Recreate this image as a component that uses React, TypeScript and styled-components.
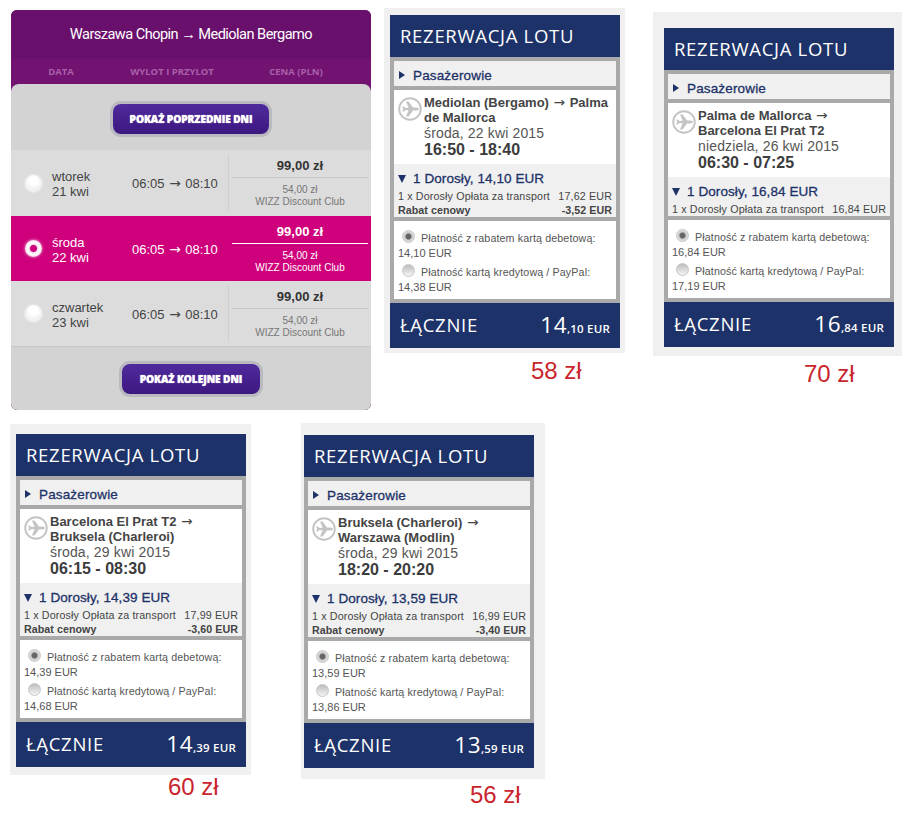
import React from "react";
import styled, { createGlobalStyle } from "styled-components";

const Global = createGlobalStyle`
  html, body { margin: 0; padding: 0; background: #fff; }
  body { font-family: "Liberation Sans", Arial, sans-serif; }
`;

const Page = styled.div`
  width: 902px;
  height: 814px;
  overflow: hidden;
  background: #fff;
`;

const TopRow = styled.div`
  display: flex;
  align-items: flex-start;
  height: 423px;
`;

const BottomRow = styled.div`
  display: flex;
  align-items: flex-start;
`;

const Arrow = styled.span`
  font-family: "DejaVu Sans", sans-serif;
  font-weight: 400;
  font-size: 1.05em;
  margin: 0 1px;
`;

/* ---------- Left schedule panel ---------- */
const Panel = styled.section`
  width: 360px;
  margin: 10px 0 0 11px;
  flex: none;
  background: #721372;
  border-radius: 6px;
  overflow: hidden;
`;

const PanelTitle = styled.h2`
  margin: 0;
  height: 49px;
  background: #69106c;
  color: #fff;
  font: 400 14.6px/49px Roboto, sans-serif;
  text-align: center;
  letter-spacing: -0.55px;
`;

const ColumnHeads = styled.div`
  display: grid;
  grid-template-columns: 100px 122px 126px;
  height: 25px;
  background: #721372;
  color: #a860a8;
  font: 700 9.5px/25px "Open Sans", sans-serif;
  text-align: center;
`;

const PanelBody = styled.div`
  background: #d3d3d3;
  border-radius: 8px 8px 6px 6px;
`;

const ButtonBar = styled.div<{ $height: number; $shift?: number }>`
  display: flex;
  justify-content: center;
  align-items: center;
  box-sizing: border-box;
  height: ${(p) => p.$height}px;
  padding-top: ${(p) => p.$shift ?? 0}px;
`;

const ShowButton = styled.button<{ $width: number }>`
  width: ${(p) => p.$width}px;
  height: 30px;
  padding: 0;
  border: none;
  border-radius: 8px;
  background: linear-gradient(#4f2a9c, #3d1880);
  box-shadow: 0 0 0 3px #b9b9c0;
  color: #fff;
  font: 800 10.2px/30px "Open Sans", sans-serif;
  letter-spacing: -0.1px;
  text-shadow: 0 0 1px #fff;
`;

const DayRow = styled.div<{ $active?: boolean; $last?: boolean }>`
  display: grid;
  grid-template-columns: 41px 80px 96px 4px 1fr;
  align-items: center;
  height: ${(p) => (p.$active ? 65 : 66)}px;
  box-sizing: border-box;
  background: ${(p) => (p.$active ? "#cf007b" : "#dcdcdc")};
  color: ${(p) => (p.$active ? "#fff" : "#444")};
  border-bottom: ${(p) => (p.$last ? "1px solid #c6c6c6" : "none")};
`;

const DayRadio = styled.span<{ $active?: boolean }>`
  justify-self: end;
  margin-right: 10px;
  width: 17px;
  height: 17px;
  border-radius: 50%;
  background: ${(p) =>
    p.$active
      ? "radial-gradient(circle, #cf007b 0 3px, #f0d8e6 4px, #fff 6px, #f7e4ef 8px)"
      : "radial-gradient(circle at 50% 35%, #fff 0 4px, #f2f2f2 8px)"};
  box-shadow: 0 0 3px rgba(255, 255, 255, 0.75);
`;

const DayName = styled.div`
  font-size: 13px;
  line-height: 15px;
  padding-top: 2px;
`;

const DayTimes = styled.div`
  font-size: 13px;
  white-space: nowrap;
`;

const DayPrices = styled.div`
  grid-column: 5;
  align-self: start;
  width: 136px;
  text-align: center;
`;

const Divider = styled.span<{ $active?: boolean }>`
  grid-column: 4;
  width: 1px;
  height: 56px;
  justify-self: start;
  background: ${(p) => (p.$active ? "transparent" : "#d0d0d0")};
`;

const MainPrice = styled.div<{ $active?: boolean }>`
  height: 28px;
  box-sizing: border-box;
  font: 700 13px/31px "Liberation Sans", sans-serif;
  color: ${(p) => (p.$active ? "#fff" : "#333")};
  border-bottom: 1px solid ${(p) => (p.$active ? "#fff" : "#c8c8c8")};
`;

const ClubPrice = styled.div<{ $active?: boolean }>`
  margin-top: 6px;
  font-size: 10px;
  line-height: 12px;
  color: ${(p) => (p.$active ? "#fff" : "#777")};
`;

/* ---------- Booking cards ---------- */
const CardColumn = styled.div<{ $left: number; $top: number }>`
  flex: none;
  margin-left: ${(p) => p.$left}px;
  margin-top: ${(p) => p.$top}px;
`;

const CardSheet = styled.article<{ $pad: string }>`
  width: fit-content;
  padding: ${(p) => p.$pad};
  background: #f0f0f0;
`;

const Card = styled.div`
  width: 230px;
`;

const CardTitle = styled.h3`
  margin: 0;
  height: 42px;
  padding-left: 10px;
  background: #1d3268;
  color: #fff;
  font: 500 18.5px/42px "Open Sans", sans-serif;
  letter-spacing: 0.7px;
`;

const Frame = styled.div`
  display: flex;
  flex-direction: column;
  gap: 4px;
  padding: 4px;
  background: #a9a9a9;
`;

const PassengerBar = styled.div`
  display: flex;
  align-items: center;
  height: 25px;
  box-sizing: border-box;
  padding: 3px 0 0 5px;
  background: #f0f0f0;
  color: #1d3268;
  font-size: 13.5px;
  letter-spacing: 0.15px;
  -webkit-text-stroke: 0.3px #1d3268;
`;

const Triangle = styled.span<{ $down?: boolean }>`
  flex: none;
  width: 0;
  height: 0;
  margin-right: 8px;
  ${(p) =>
    p.$down
      ? "border-left: 4.5px solid transparent; border-right: 4.5px solid transparent; border-top: 8px solid #1d3268; margin-left: -2px; margin-right: 7px;"
      : "border-top: 4px solid transparent; border-bottom: 4px solid transparent; border-left: 6.5px solid #1d3268;"}
`;

const RouteBox = styled.div`
  display: flex;
  height: 74px;
  box-sizing: border-box;
  padding: 5px 4px 0 4px;
  background: #fff;
  color: #444;
`;

const PlaneBadge = styled.svg`
  flex: none;
  width: 24px;
  height: 24px;
  margin: 2px 2px 0 0;
`;

const RouteText = styled.div`
  display: flex;
  flex-direction: column;
`;

const RouteName = styled.div`
  font: 700 13px/15px "Liberation Sans", sans-serif;
  color: #444;
`;

const RouteDate = styled.div`
  font-size: 14px;
  line-height: 16px;
  letter-spacing: 0.15px;
  color: #555;
`;

const RouteTime = styled.div`
  font: 700 16px/17px "Liberation Sans", sans-serif;
  color: #3c3c3c;
`;

const Fares = styled.div`
  margin-top: -4px;
  padding: 7px 4px 0;
  background: #f0f0f0;
`;

const FareHead = styled.div`
  display: flex;
  align-items: center;
  height: 15px;
  margin-bottom: 3px;
  padding-left: 2px;
  color: #1d3268;
  font-size: 13.5px;
  letter-spacing: 0.08px;
  -webkit-text-stroke: 0.3px #1d3268;
`;

const FareLine = styled.div<{ $strong?: boolean }>`
  display: flex;
  justify-content: space-between;
  height: 14px;
  font-size: 10.7px;
  line-height: 14px;
  letter-spacing: ${(p) => (p.$strong ? 0.05 : 0.15)}px;
  font-weight: ${(p) => (p.$strong ? 700 : 400)};
  color: #444;
`;

const PaymentBox = styled.div`
  height: 78px;
  box-sizing: border-box;
  padding: 10px 4px 0;
  background: #fff;
  color: #555;
`;

const PayLine = styled.div<{ $gap?: number }>`
  display: flex;
  align-items: flex-end;
  height: 15px;
  margin-top: ${(p) => p.$gap ?? 0}px;
  padding-left: 4px;
  font-size: 10.7px;
  line-height: 15px;
  letter-spacing: 0.12px;
  white-space: nowrap;
`;

const PayAmount = styled.div`
  height: 14px;
  font-size: 11px;
  line-height: 14px;
`;

const CardRadio = styled.span<{ $on?: boolean }>`
  flex: none;
  width: 13px;
  height: 13px;
  margin: 0 6px 3px 0;
  border-radius: 50%;
  border: 1px solid #c6c6c6;
  box-sizing: border-box;
  background: ${(p) =>
    p.$on
      ? "radial-gradient(circle, #666 0 2.5px, #c8c8c8 3.5px, #e8e8e8 6px)"
      : "linear-gradient(#bdbdbd, #f5f5f5)"};
`;

const TotalBar = styled.div`
  display: flex;
  justify-content: space-between;
  align-items: center;
  height: 45px;
  padding: 0 10px;
  background: #1d3268;
  color: #fff;
`;

const TotalLabel = styled.span`
  font: 500 18.5px/1 "Open Sans", sans-serif;
  letter-spacing: 0.7px;
`;

const TotalValue = styled.span`
  font: 500 22.5px/1 "Open Sans", sans-serif;
  letter-spacing: 0.5px;
`;

const TotalCents = styled.span`
  font: 600 11.5px/1 "Open Sans", sans-serif;
  letter-spacing: 0.2px;
`;

const PlnTag = styled.div<{ $left: number; $top: number }>`
  margin-left: ${(p) => p.$left}px;
  margin-top: ${(p) => p.$top}px;
  color: #c9252d;
  font-size: 24px;
  line-height: 26px;
`;

const PlaneIcon = () => (
  <PlaneBadge viewBox="0 0 24 24" aria-hidden="true">
    <circle cx="12" cy="12" r="10.8" fill="#fff" stroke="#c4c4c4" strokeWidth="1.9" />
    <path
      d="M4.2 9.4 L5.8 9.4 L7.6 11 L10.6 10.8 L8 4.4 L10.6 4.4 L15 10.6 L18 10.6 C20.2 10.7 21 11.5 21 12 C21 12.6 20.2 13.3 18 13.4 L15 13.4 L10.6 19.6 L8 19.6 L10.6 13.2 L7.6 13 L5.8 14.6 L4.2 14.6 L5.2 12 Z"
      fill="#c4c4c4"
    />
  </PlaneBadge>
);

type Booking = {
  route: React.ReactNode[];
  date: string;
  time: string;
  adult: string;
  fare: string;
  rebate?: string;
  debit: string;
  credit: string;
  whole: string;
  cents: string;
};

const BookingCard = ({ b }: { b: Booking }) => (
  <Card>
    <CardTitle>REZERWACJA LOTU</CardTitle>
    <Frame>
      <PassengerBar>
        <Triangle />
        Pasażerowie
      </PassengerBar>
      <RouteBox>
        <PlaneIcon />
        <RouteText>
          <RouteName>
            {b.route[0]}
            <br />
            {b.route[1]}
          </RouteName>
          <RouteDate>{b.date}</RouteDate>
          <RouteTime>{b.time}</RouteTime>
        </RouteText>
      </RouteBox>
      <Fares>
        <FareHead>
          <Triangle $down />1 Dorosły, {b.adult} EUR
        </FareHead>
        <FareLine>
          <span>1 x Dorosły Opłata za transport</span>
          <span>{b.fare} EUR</span>
        </FareLine>
        {b.rebate && (
          <FareLine $strong>
            <span>Rabat cenowy</span>
            <span>{b.rebate} EUR</span>
          </FareLine>
        )}
      </Fares>
      <PaymentBox>
        <PayLine>
          <CardRadio $on />
          Płatność z rabatem kartą debetową:
        </PayLine>
        <PayAmount>{b.debit} EUR</PayAmount>
        <PayLine $gap={5}>
          <CardRadio />
          Płatność kartą kredytową / PayPal:
        </PayLine>
        <PayAmount>{b.credit} EUR</PayAmount>
      </PaymentBox>
    </Frame>
    <TotalBar>
      <TotalLabel>ŁĄCZNIE</TotalLabel>
      <TotalValue>
        {b.whole}
        <TotalCents>,{b.cents} EUR</TotalCents>
      </TotalValue>
    </TotalBar>
  </Card>
);

const days = [
  { name: "wtorek", date: "21 kwi" },
  { name: "środa", date: "22 kwi", active: true },
  { name: "czwartek", date: "23 kwi", last: true },
];

const bookings: Record<string, Booking> = {
  bgy: {
    route: [<>Mediolan (Bergamo) <Arrow>→</Arrow> Palma</>, "de Mallorca"],
    date: "środa, 22 kwi 2015",
    time: "16:50 - 18:40",
    adult: "14,10",
    fare: "17,62",
    rebate: "-3,52",
    debit: "14,10",
    credit: "14,38",
    whole: "14",
    cents: "10",
  },
  pmi: {
    route: [<>Palma de Mallorca <Arrow>→</Arrow></>, "Barcelona El Prat T2"],
    date: "niedziela, 26 kwi 2015",
    time: "06:30 - 07:25",
    adult: "16,84",
    fare: "16,84",
    debit: "16,84",
    credit: "17,19",
    whole: "16",
    cents: "84",
  },
  bcn: {
    route: [<>Barcelona El Prat T2 <Arrow>→</Arrow></>, "Bruksela (Charleroi)"],
    date: "środa, 29 kwi 2015",
    time: "06:15 - 08:30",
    adult: "14,39",
    fare: "17,99",
    rebate: "-3,60",
    debit: "14,39",
    credit: "14,68",
    whole: "14",
    cents: "39",
  },
  crl: {
    route: [<>Bruksela (Charleroi) <Arrow>→</Arrow></>, "Warszawa (Modlin)"],
    date: "środa, 29 kwi 2015",
    time: "18:20 - 20:20",
    adult: "13,59",
    fare: "16,99",
    rebate: "-3,40",
    debit: "13,59",
    credit: "13,86",
    whole: "13",
    cents: "59",
  },
};

export default function App() {
  return (
    <Page>
      <Global />
      <TopRow>
        <Panel>
          <PanelTitle>Warszawa Chopin → Mediolan Bergamo</PanelTitle>
          <ColumnHeads>
            <span>DATA</span>
            <span>WYLOT I PRZYLOT</span>
            <span>CENA (PLN)</span>
          </ColumnHeads>
          <PanelBody>
            <ButtonBar $height={66} $shift={4}>
              <ShowButton $width={156}>POKAŻ POPRZEDNIE DNI</ShowButton>
            </ButtonBar>
            {days.map((d) => (
              <DayRow key={d.name} $active={d.active} $last={d.last}>
                <DayRadio $active={d.active} />
                <DayName>
                  {d.name}
                  <br />
                  {d.date}
                </DayName>
                <DayTimes>06:05 <Arrow>→</Arrow> 08:10</DayTimes>
                <Divider $active={d.active} />
                <DayPrices>
                  <MainPrice $active={d.active}>99,00 zł</MainPrice>
                  <ClubPrice $active={d.active}>
                    54,00 zł
                    <br />
                    WIZZ Discount Club
                  </ClubPrice>
                </DayPrices>
              </DayRow>
            ))}
            <ButtonBar $height={63}>
              <ShowButton $width={138}>POKAŻ KOLEJNE DNI</ShowButton>
            </ButtonBar>
          </PanelBody>
        </Panel>
        <CardColumn $left={13} $top={8}>
          <CardSheet $pad="7px 5px 5px 6px">
            <BookingCard b={bookings.bgy} />
          </CardSheet>
          <PlnTag $left={147} $top={5}>58 zł</PlnTag>
        </CardColumn>
        <CardColumn $left={28} $top={12}>
          <CardSheet $pad="16px 8px 9px 11px">
            <BookingCard b={bookings.pmi} />
          </CardSheet>
          <PlnTag $left={151} $top={5}>70 zł</PlnTag>
        </CardColumn>
      </TopRow>
      <BottomRow>
        <CardColumn $left={10} $top={1}>
          <CardSheet $pad="10px 5px 8px 6px">
            <BookingCard b={bookings.bcn} />
          </CardSheet>
          <PlnTag $left={158} $top={-1}>60 zł</PlnTag>
        </CardColumn>
        <CardColumn $left={50} $top={0}>
          <CardSheet $pad="12px 11px 11px 3px">
            <BookingCard b={bookings.crl} />
          </CardSheet>
          <PlnTag $left={169} $top={3}>56 zł</PlnTag>
        </CardColumn>
      </BottomRow>
    </Page>
  );
}
